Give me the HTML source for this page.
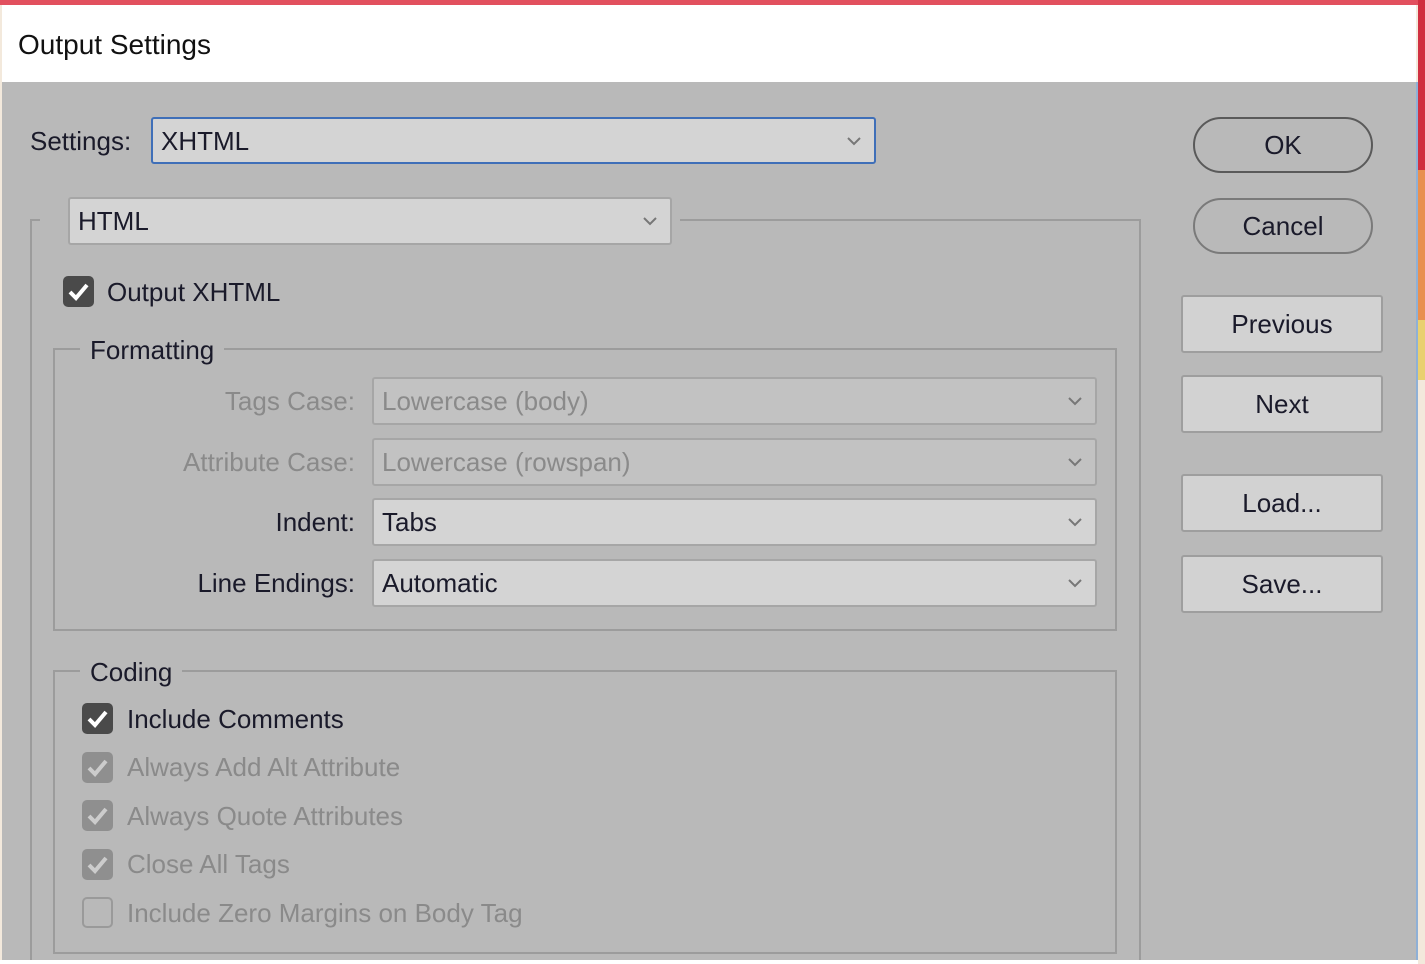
<!DOCTYPE html>
<html><head><meta charset="utf-8"><style>
*{box-sizing:border-box;margin:0;padding:0}
html,body{width:1425px;height:964px;overflow:hidden}
body{background:#f3e9dc;font-family:"Liberation Sans",sans-serif;position:relative}
.a{position:absolute}
.t{font-size:26px;color:#1a1a2a;letter-spacing:0;white-space:nowrap}
.dis{color:#8a8a8a}
.sel{position:absolute;background:#d4d4d4;border:2px solid #a6a6a6;border-radius:3px}
.sel span{position:absolute;left:8px;top:7px}
.chev{position:absolute;right:12px;top:50%;margin-top:-5px;width:16px;height:10px}
.grp{position:absolute;border:2px solid #9c9c9c}
.lg{position:absolute;background:#b9b9b9;padding:0 10px}
.cb{position:absolute;width:31px;height:31px;border-radius:5px;background:#4a4a4a}
.cb.d{background:#8f8f8f}
.cb.e{background:transparent;border:2px solid #9a9a9a}
.cb svg{position:absolute;left:5px;top:6px}
.pill{position:absolute;width:180px;height:56px;border:2px solid #5a5a5a;border-radius:28px;text-align:center;line-height:52px}
.btn{position:absolute;left:1181px;width:202px;height:58px;background:#d2d2d2;border:2px solid #9e9e9e;border-radius:3px;text-align:center;line-height:54px}
</style></head><body>
<div class="a" style="left:0;top:0;width:1418px;height:5px;background:#e2505e"></div>
<div class="a" style="left:1418px;top:0;width:7px;height:170px;background:#d03040"></div>
<div class="a" style="left:1418px;top:170px;width:7px;height:150px;background:#e89050"></div>
<div class="a" style="left:1418px;top:320px;width:7px;height:60px;background:#e9d070"></div>
<div class="a" style="left:2px;top:5px;width:1414px;height:77px;background:#fff"></div>
<div class="a t" style="left:18px;top:29px;font-size:28px;color:#111">Output Settings</div>
<div class="a" style="left:2px;top:82px;width:1416px;height:878px;background:#b9b9b9;border-right:2px solid #8fb0d6;overflow:hidden">
<div class="grp" style="left:28px;top:137px;width:1111px;height:760px"></div>
</div>
<div class="a" style="left:0;top:960px;width:1418px;height:4px;background:#fff"></div>

<div class="a t" style="left:30px;top:126px">Settings:</div>
<div class="sel" style="left:151px;top:117px;width:725px;height:47px;border-color:#3f6fb8"><span class="t">XHTML</span><svg class="chev" viewBox="0 0 16 10"><path d="M2 2L8 8L14 2" fill="none" stroke="#777" stroke-width="2"/></svg></div>

<div class="a" style="left:40px;top:200px;width:640px;height:40px;background:#b9b9b9"></div>
<div class="sel" style="left:68px;top:197px;width:604px;height:48px"><span class="t">HTML</span><svg class="chev" viewBox="0 0 16 10"><path d="M2 2L8 8L14 2" fill="none" stroke="#777" stroke-width="2"/></svg></div>

<div class="cb" style="left:63px;top:276px"><svg width="21" height="19" viewBox="0 0 21 19"><path d="M2 10L8 16L19 3" fill="none" stroke="#fff" stroke-width="4"/></svg></div>
<div class="a t" style="left:107px;top:277px">Output XHTML</div>

<div class="grp" style="left:53px;top:348px;width:1064px;height:283px"></div>
<div class="lg t" style="left:80px;top:335px">Formatting</div>

<div class="a t dis" style="left:0;width:355px;text-align:right;top:386px">Tags Case:</div>
<div class="a t dis" style="left:0;width:355px;text-align:right;top:447px">Attribute Case:</div>
<div class="a t" style="left:0;width:355px;text-align:right;top:507px">Indent:</div>
<div class="a t" style="left:0;width:355px;text-align:right;top:568px">Line Endings:</div>

<div class="sel" style="left:372px;top:377px;width:725px;height:48px;background:#c2c2c2"><span class="t dis">Lowercase (body)</span><svg class="chev" viewBox="0 0 16 10"><path d="M2 2L8 8L14 2" fill="none" stroke="#777" stroke-width="2"/></svg></div>
<div class="sel" style="left:372px;top:438px;width:725px;height:48px;background:#c2c2c2"><span class="t dis">Lowercase (rowspan)</span><svg class="chev" viewBox="0 0 16 10"><path d="M2 2L8 8L14 2" fill="none" stroke="#777" stroke-width="2"/></svg></div>
<div class="sel" style="left:372px;top:498px;width:725px;height:48px"><span class="t">Tabs</span><svg class="chev" viewBox="0 0 16 10"><path d="M2 2L8 8L14 2" fill="none" stroke="#777" stroke-width="2"/></svg></div>
<div class="sel" style="left:372px;top:559px;width:725px;height:48px"><span class="t">Automatic</span><svg class="chev" viewBox="0 0 16 10"><path d="M2 2L8 8L14 2" fill="none" stroke="#777" stroke-width="2"/></svg></div>

<div class="grp" style="left:53px;top:670px;width:1064px;height:284px"></div>
<div class="lg t" style="left:80px;top:657px">Coding</div>

<div class="cb" style="left:82px;top:703px"><svg width="21" height="19" viewBox="0 0 21 19"><path d="M2 10L8 16L19 3" fill="none" stroke="#fff" stroke-width="4"/></svg></div>
<div class="a t" style="left:127px;top:704px">Include Comments</div>
<div class="cb d" style="left:82px;top:752px"><svg width="21" height="19" viewBox="0 0 21 19"><path d="M2 10L8 16L19 3" fill="none" stroke="#ccc" stroke-width="4"/></svg></div>
<div class="a t dis" style="left:127px;top:752px">Always Add Alt Attribute</div>
<div class="cb d" style="left:82px;top:800px"><svg width="21" height="19" viewBox="0 0 21 19"><path d="M2 10L8 16L19 3" fill="none" stroke="#ccc" stroke-width="4"/></svg></div>
<div class="a t dis" style="left:127px;top:801px">Always Quote Attributes</div>
<div class="cb d" style="left:82px;top:849px"><svg width="21" height="19" viewBox="0 0 21 19"><path d="M2 10L8 16L19 3" fill="none" stroke="#ccc" stroke-width="4"/></svg></div>
<div class="a t dis" style="left:127px;top:849px">Close All Tags</div>
<div class="cb e" style="left:82px;top:897px"></div>
<div class="a t dis" style="left:127px;top:898px">Include Zero Margins on Body Tag</div>

<div class="pill t" style="left:1193px;top:117px">OK</div>
<div class="pill t" style="left:1193px;top:198px;border-color:#7a7a7a">Cancel</div>
<div class="btn t" style="top:295px">Previous</div>
<div class="btn t" style="top:375px">Next</div>
<div class="btn t" style="top:474px">Load...</div>
<div class="btn t" style="top:555px">Save...</div>
</body></html>
